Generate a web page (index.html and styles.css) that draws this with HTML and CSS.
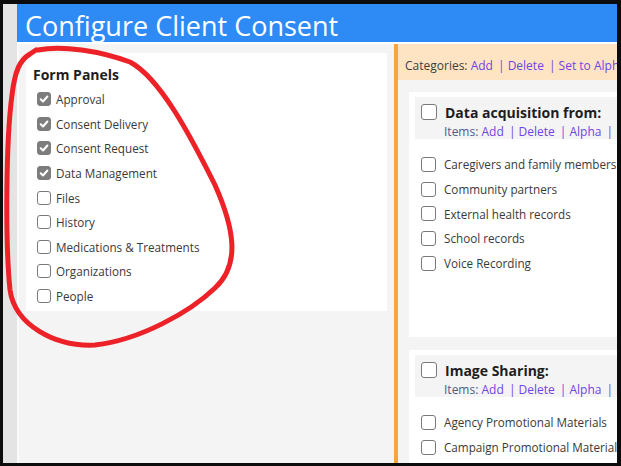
FILE: index.html
```html
<!DOCTYPE html>
<html lang="en">
<head>
    <meta charset="UTF-8">
    <meta name="viewport" content="width=device-width, initial-scale=1.0">
    <title>Configure Client Consent</title>
    <link rel="stylesheet" href="styles.css">
</head>
<body>
    <div class="frame">
        <div class="rail"></div>
        <div class="page">
            <div class="title-bar">Configure Client Consent</div>
            <div class="content">
                <div class="left-col">
                    <div class="panel-box">
                        <div class="panel-title">Form Panels</div>
                        <label class="row"><span class="box checked"><svg viewBox="0 0 12 12"><path d="M2.7 6.3 L5 8.5 L9.4 3.5" /></svg></span>Approval</label>
                        <label class="row"><span class="box checked"><svg viewBox="0 0 12 12"><path d="M2.7 6.3 L5 8.5 L9.4 3.5" /></svg></span>Consent Delivery</label>
                        <label class="row"><span class="box checked"><svg viewBox="0 0 12 12"><path d="M2.7 6.3 L5 8.5 L9.4 3.5" /></svg></span>Consent Request</label>
                        <label class="row"><span class="box checked"><svg viewBox="0 0 12 12"><path d="M2.7 6.3 L5 8.5 L9.4 3.5" /></svg></span>Data Management</label>
                        <label class="row"><span class="box"></span>Files</label>
                        <label class="row"><span class="box"></span>History</label>
                        <label class="row"><span class="box"></span>Medications &amp; Treatments</label>
                        <label class="row"><span class="box"></span>Organizations</label>
                        <label class="row"><span class="box"></span>People</label>
                    </div>
                </div>
                <div class="right-col">
                    <div class="cat-bar">
                        Categories: <a href="#">Add</a> <span class="sep">|</span><a href="#">Delete</a> <span class="sep">|</span><a href="#">Set to Alphabetical</a>
                    </div>
                    <div class="cards">
                        <div class="card">
                            <div class="card-head">
                                <div class="head-line"><span class="box big"></span><span class="card-title">Data acquisition from:</span></div>
                                <div class="tools">Items: <a href="#">Add</a> <span class="sep">|</span><a href="#">Delete</a> <span class="sep">|</span><a href="#">Alpha</a> <span class="sep">|</span><a href="#">Move</a></div>
                            </div>
                            <div class="items">
                                <label class="row"><span class="box"></span>Caregivers and family members</label>
                                <label class="row"><span class="box"></span>Community partners</label>
                                <label class="row"><span class="box"></span>External health records</label>
                                <label class="row"><span class="box"></span>School records</label>
                                <label class="row"><span class="box"></span>Voice Recording</label>
                            </div>
                        </div>
                        <div class="card">
                            <div class="card-head">
                                <div class="head-line"><span class="box big"></span><span class="card-title">Image Sharing:</span></div>
                                <div class="tools">Items: <a href="#">Add</a> <span class="sep">|</span><a href="#">Delete</a> <span class="sep">|</span><a href="#">Alpha</a> <span class="sep">|</span><a href="#">Move</a></div>
                            </div>
                            <div class="items">
                                <label class="row"><span class="box"></span>Agency Promotional Materials</label>
                                <label class="row"><span class="box"></span>Campaign Promotional Materials</label>
                                <label class="row"><span class="box"></span>Social Media Posts</label>
                            </div>
                        </div>
                    </div>
                </div>
            </div>
        </div>
    </div>

    <!-- marker loop drawn over the form panels list -->
    <svg class="marker" viewBox="0 0 621 466">
        <path d="M38 50 C62 45, 100 51, 130 62 C160 78, 190 135, 215 185 C235 230, 240 265, 215 288 C190 312, 140 340, 95 345 C55 347, 15 325, 10 290 C5 240, 6 140, 12 95 C15 70, 20 60, 30 54 L36 50" />
    </svg>
</body>
</html>
```

FILE: styles.css
```css
body {
    margin: 0;
    background-color: #0c0c0c;
    font-family: "Open Sans", "Noto Sans", sans-serif;
    overflow: hidden;
}
.frame {
    margin: 4px 4px 0 3px;
    height: 459px;
    display: flex;
    overflow: hidden;
}
.rail {
    width: 14px;
    flex-shrink: 0;
    background-color: #e4e4e4;
}
.page {
    flex: 1;
    min-width: 0;
    display: flex;
    flex-direction: column;
    background-color: #f4f4f4;
}
.title-bar {
    height: 38px;
    box-sizing: border-box;
    flex-shrink: 0;
    background-color: #2e8bf5;
    color: white;
    font-size: 27px;
    line-height: 32px;
    padding: 6px 0 0 8px;
    white-space: nowrap;
}
.content {
    flex: 1;
    display: flex;
    min-height: 0;
    border-top: 2px solid white;
}
.left-col {
    width: 361px;
    flex-shrink: 0;
    padding: 9px 7px 0 7px;
    border-left: 2px solid #fafafa;
    border-right: 4px solid #f8a63b;
}
.panel-box {
    background-color: white;
    height: 244px;
    padding: 14px 0 0 7px;
}
.panel-title {
    font-size: 14px;
    font-weight: bold;
    color: #1e1e1e;
    line-height: 16px;
    margin-bottom: 4px;
}
.row {
    display: flex;
    align-items: center;
    height: 24.6px;
    font-size: 11.7px;
    color: #3a3a3a;
    white-space: nowrap;
}
.panel-box .row {
    padding-left: 4px;
}
.box {
    width: 12px;
    height: 12px;
    border: 1px solid #7a7a7a;
    border-radius: 3px;
    background-color: white;
    margin-right: 5px;
    flex-shrink: 0;
    display: flex;
}
.box.checked {
    background-color: #7d7d7d;
    border-color: #7d7d7d;
}
.box svg {
    width: 12px;
    height: 12px;
}
.box svg path {
    fill: none;
    stroke: white;
    stroke-width: 2;
    stroke-linecap: round;
    stroke-linejoin: round;
}
.box.big {
    width: 14px;
    height: 14px;
    margin-right: 8px;
}
.right-col {
    flex: 1;
    min-width: 0;
    overflow: hidden;
}
.cat-bar {
    height: 36px;
    box-sizing: border-box;
    padding: 13px 0 0 7px;
    background-color: #fee4c3;
    font-size: 12px;
    color: #3e3e3e;
    white-space: nowrap;
}
a {
    color: #7044e4;
    text-decoration: none;
}
.sep {
    color: #7044e4;
    margin: 0 3px 0 2px;
}
.cards {
    padding: 12px 0 0 11px;
    width: 420px;
}
.card {
    background-color: white;
    height: 235px;
    padding: 5px 6px;
    margin-bottom: 13px;
}
.card-head {
    background-color: #f4f4f4;
    height: 42px;
    box-sizing: border-box;
    padding: 6px 0 0 6px;
}
.head-line {
    display: flex;
    align-items: center;
    height: 18px;
}
.card-title {
    font-size: 14px;
    font-weight: bold;
    color: #1e1e1e;
}
.tools {
    font-size: 12px;
    color: #4f5a8c;
    padding-left: 23px;
    margin-top: 3px;
    line-height: 16px;
    white-space: nowrap;
}
.items {
    padding: 13px 0 0 6px;
}
.items .row {
    height: 24.7px;
}
.items .box {
    width: 13px;
    height: 13px;
    margin-right: 8px;
}
.marker {
    position: absolute;
    left: 0;
    top: 0;
    width: 621px;
    height: 466px;
    pointer-events: none;
}
.marker path {
    fill: none;
    stroke: #ec2228;
    stroke-width: 5;
    stroke-linecap: round;
    stroke-linejoin: round;
}
```
